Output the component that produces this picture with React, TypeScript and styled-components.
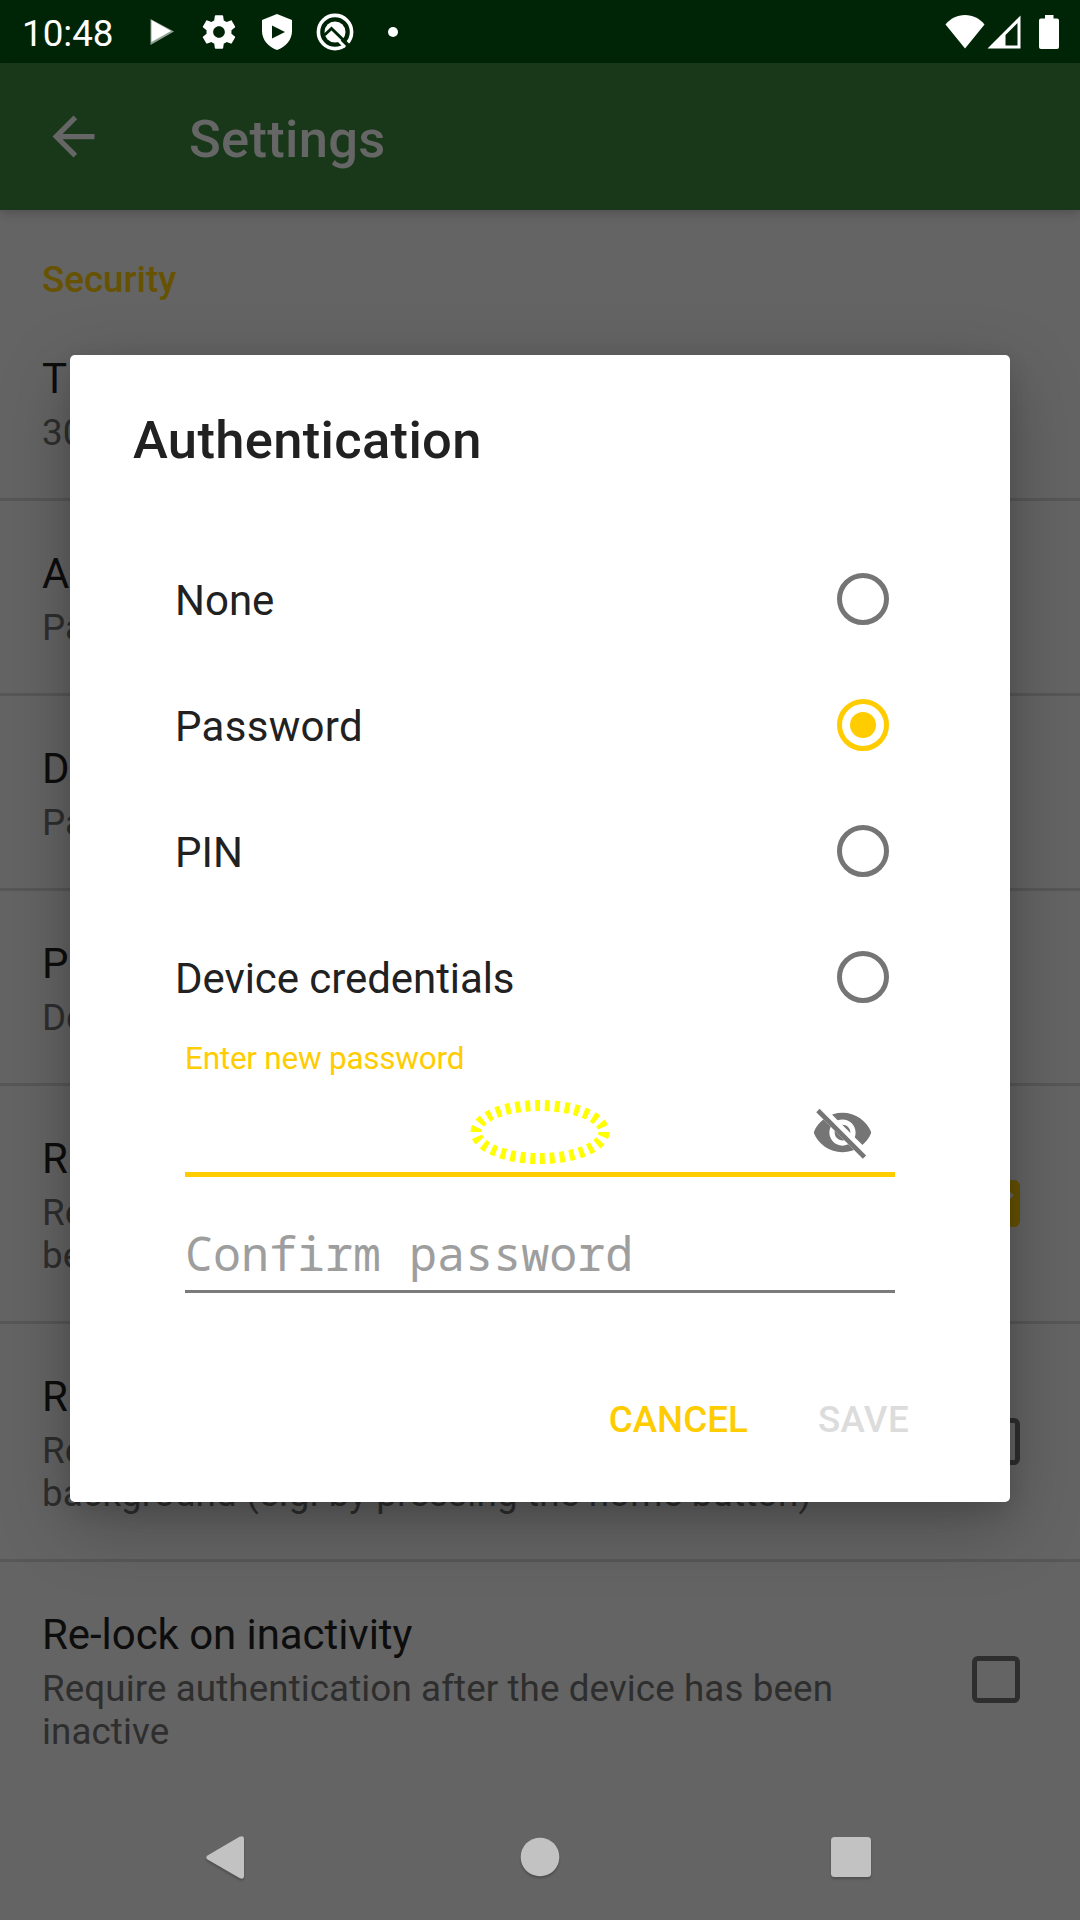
import React from "react";
import styled, { createGlobalStyle } from "styled-components";

const Global = createGlobalStyle`
  *, *::before, *::after { box-sizing: border-box; }
  body { margin: 0; background: #646464; font-family: Roboto, "Noto Sans", sans-serif; }
`;

const Screen = styled.div`
  position: relative;
  width: 1080px;
  height: 1920px;
  display: flex;
  flex-direction: column;
  overflow: hidden;
  background: #646464;
`;

const StatusBar = styled.header`
  display: flex;
  align-items: center;
  justify-content: space-between;
  flex: none;
  height: 63px;
  padding: 0 21px 0 22px;
  background: #002506;
  color: #fff;
`;

const Clock = styled.span`
  font-size: 36.75px;
  line-height: 43px;
  margin-right: 28px;
  padding-top: 3px;
`;

const StatusGroup = styled.div`
  display: flex;
  align-items: center;
`;

const StatusIcon = styled.svg<{ $gap?: number }>`
  display: block;
  flex: none;
  margin-left: ${(p) => p.$gap ?? 0}px;
`;

const AppBar = styled.div`
  position: relative;
  display: flex;
  align-items: center;
  flex: none;
  height: 147px;
  padding-left: 42px;
  gap: 84px;
  background: #183819;
  box-shadow: 0 3px 10px rgba(0, 0, 0, 0.2);
`;

const AppTitle = styled.h1`
  margin: 0;
  padding-top: 5px;
  font-size: 52.5px;
  font-weight: 500;
  line-height: 62px;
  letter-spacing: 0.3px;
  color: #666;
`;

const List = styled.main`
  flex: 1;
  min-height: 0;
  overflow: hidden;
`;

const SectionTitle = styled.h2`
  margin: 0;
  padding: 48px 42px 5px;
  font-size: 36.75px;
  font-weight: 500;
  line-height: 43px;
  color: #665200;
`;

const Row = styled.div<{ $last?: boolean }>`
  display: flex;
  align-items: center;
  justify-content: space-between;
  padding: 0 60px 0 42px;
  border-bottom: ${(p) => (p.$last ? "none" : "3px solid #575757")};
`;

const RowText = styled.div`
  padding: 48px 0 44px;
  white-space: nowrap;
`;

const RowTitle = styled.div`
  font-size: 42px;
  line-height: 49px;
  letter-spacing: -0.06px;
  color: #0d0d0d;
`;

const RowSummary = styled.div<{ $tracking: number }>`
  margin-top: 8px;
  font-size: 36.75px;
  line-height: 43px;
  letter-spacing: ${(p) => p.$tracking}px;
  color: #2e2e2e;
`;

const Check = styled.span<{ $on: boolean }>`
  display: flex;
  align-items: center;
  justify-content: center;
  width: 48px;
  height: 47px;
  border: 5px solid ${(p) => (p.$on ? "#665200" : "#2e2e2e")};
  border-radius: 6px;
  background: ${(p) => (p.$on ? "#665200" : "transparent")};
`;

const CheckMark = styled.svg`
  flex: none;
`;

const NavBar = styled.nav`
  display: flex;
  align-items: center;
  flex: none;
  height: 126px;
  padding-left: 206px;
  svg { display: block; filter: drop-shadow(0 2px 1px rgba(0, 0, 0, 0.22)); }
`;

const NavIcon = styled.svg<{ $gap?: number }>`
  flex: none;
  margin-left: ${(p) => p.$gap ?? 0}px;
`;

const DialogLayer = styled.div`
  position: absolute;
  inset: 0;
  padding: 355px 70px 0;
`;

const Dialog = styled.section`
  position: relative;
  display: flex;
  flex-direction: column;
  height: 1147px;
  padding-top: 54px;
  border-radius: 5px;
  background: #fff;
  box-shadow: 0 22px 70px rgba(0, 0, 0, 0.26), 0 8px 22px rgba(0, 0, 0, 0.1);
`;

const DialogTitle = styled.h2`
  margin: 0 63px 65px;
  font-size: 52.5px;
  font-weight: 500;
  line-height: 62px;
  letter-spacing: 0.33px;
  color: #212121;
`;

const Option = styled.div`
  display: flex;
  align-items: center;
  justify-content: space-between;
  height: 126px;
  padding: 0 121px 0 105px;
  font-size: 42px;
  line-height: 49px;
  color: #212121;
`;

const OptionLabel = styled.span<{ $tracking: number }>`
  padding-top: 3px;
  letter-spacing: ${(p) => p.$tracking}px;
`;

const Radio = styled.span<{ $on: boolean }>`
  display: flex;
  align-items: center;
  justify-content: center;
  width: 52px;
  height: 52px;
  border: 5px solid ${(p) => (p.$on ? "#ffcc00" : "#757575")};
  border-radius: 50%;
  &::after {
    content: "";
    width: 26px;
    height: 26px;
    border-radius: 50%;
    background: ${(p) => (p.$on ? "#ffcc00" : "transparent")};
  }
`;

const Fields = styled.div`
  display: flex;
  flex-direction: column;
  margin: 0 115px;
`;

const FloatingLabel = styled.label`
  font-size: 31.5px;
  line-height: 37px;
  letter-spacing: -0.24px;
  color: #ffcc00;
`;

const PasswordField = styled.div`
  display: flex;
  justify-content: flex-end;
  height: 100px;
  padding: 24px 21px 0 0;
  border-bottom: 5px solid #ffcc00;
`;

const ConfirmField = styled.div`
  height: 116px;
  padding-top: 49px;
  border-bottom: 3px solid #7b7b7b;
  font-family: "Noto Sans Mono", "DejaVu Sans Mono", monospace;
  font-size: 46.7px;
  line-height: 55px;
  color: #9e9e9e;
`;

const FocusRing = styled.svg`
  position: absolute;
  left: 400px;
  top: 744px;
`;

const Actions = styled.div`
  display: flex;
  justify-content: flex-end;
  gap: 70px;
  margin-top: 105px;
  padding-right: 101px;
`;

const Action = styled.button<{ $disabled?: boolean }>`
  padding: 0;
  border: 0;
  background: none;
  font: 500 36.75px/43px Roboto, "Noto Sans", sans-serif;
  letter-spacing: ${(p) => (p.$disabled ? 0.35 : 0.05)}px;
  color: ${(p) => (p.$disabled ? "#dcdcdc" : "#ffcc00")};
`;

type Setting = { title: string; summary: string[]; tracking?: number; checked?: boolean };

const settings: Setting[] = [
  { title: "T", summary: ["30"] },
  { title: "A", summary: ["Pa"] },
  { title: "D", summary: ["Pa"] },
  { title: "P", summary: ["De"] },
  { title: "R", summary: ["Re", "be"], checked: true },
  {
    title: "R",
    summary: ["Re", "background (e.g. by pressing the home button)"],
    tracking: 0.19,
    checked: false,
  },
  {
    title: "Re-lock on inactivity",
    summary: ["Require authentication after the device has been", "inactive"],
    tracking: 0.1,
    checked: false,
  },
];

const options = [
  { label: "None", tracking: 0 },
  { label: "Password", tracking: 0.3, selected: true },
  { label: "PIN", tracking: 0 },
  { label: "Device credentials", tracking: -0.07 },
];

function StatusIcons() {
  return (
    <StatusGroup>
      <Clock>10:48</Clock>
      <StatusIcon $gap={8} width="24" height="28" viewBox="0 0 24 28">
        <path d="M0.5 1L24 13.5L0.5 27Z" fill="#8da291" />
        <path d="M1.5 2L21 13L1.5 24Z" fill="#fff" />
      </StatusIcon>
      <StatusIcon $gap={25} width="40" height="40" viewBox="0 0 24 24" fill="#fff">
        <path d="M19.43 12.98c.04-.32.07-.64.07-.98s-.03-.66-.07-.98l2.11-1.65c.19-.15.24-.42.12-.64l-2-3.46c-.12-.22-.39-.3-.61-.22l-2.49 1c-.52-.4-1.08-.73-1.69-.98l-.38-2.65C14.46 2.18 14.25 2 14 2h-4c-.25 0-.46.18-.49.42l-.38 2.65c-.61.25-1.17.59-1.69.98l-2.49-1c-.23-.09-.49 0-.61.22l-2 3.46c-.13.22-.07.49.12.64l2.11 1.65c-.04.32-.07.65-.07.98s.03.66.07.98l-2.11 1.65c-.19.15-.24.42-.12.64l2 3.46c.12.22.39.3.61.22l2.49-1c.52.4 1.08.73 1.69.98l.38 2.65c.03.24.24.42.49.42h4c.25 0 .46-.18.49-.42l.38-2.65c.61-.25 1.17-.59 1.69-.98l2.49 1c.23.09.49 0 .61-.22l2-3.46c.12-.22.07-.49-.12-.64l-2.11-1.65zM12 15.5c-1.93 0-3.5-1.57-3.5-3.5s1.57-3.5 3.5-3.5 3.5 1.57 3.5 3.5-1.57 3.500-3.500 3.500z" />
      </StatusIcon>
      <StatusIcon $gap={23} width="30" height="36" viewBox="0 0 30 36">
        <path d="M15 0L30 6V17C30 26 23.5 33 15 36C6.500 33 0 26 0 17V6Z" fill="#fff" />
        <path d="M10 11.500L23 18L10 24.500Z" fill="#002506" />
      </StatusIcon>
      <StatusIcon $gap={24} width="38" height="38" viewBox="0 0 38 38">
        <circle cx="19" cy="19" r="16.600" fill="none" stroke="#fff" strokeWidth="3.600" />
        <circle cx="19" cy="19" r="10.500" fill="#fff" />
        <path d="M8.500 22L15.500 15.500L33 32.500" fill="none" stroke="#002506" strokeWidth="3" />
        <path d="M26 27L34 36" stroke="#002506" strokeWidth="4" />
        <path d="M22.500 27.500L29 34" stroke="#fff" strokeWidth="3" />
      </StatusIcon>
      <StatusIcon $gap={34} width="10" height="10" viewBox="0 0 10 10">
        <circle cx="5" cy="5" r="5" fill="#fff" />
      </StatusIcon>
    </StatusGroup>
  );
}

function SystemIcons() {
  return (
    <StatusGroup>
      <StatusIcon width="40" height="34" viewBox="0 0 40 34">
        <path d="M0.500 9.500C5.500 3.500 12 0 20 0S34.500 3.500 39.500 9.500L20 33.500Z" fill="#fff" />
      </StatusIcon>
      <StatusIcon $gap={2} width="34" height="34" viewBox="0 0 34 34">
        <path fillRule="evenodd" d="M33.500 0.500V33.500H0.500ZM30.500 8L18.500 20V30.500H30.500Z" fill="#fff" />
      </StatusIcon>
      <StatusIcon $gap={18} width="20" height="34" viewBox="0 0 20 34">
        <path d="M6 0H14.500V3.500H18Q20 3.500 20 5.500V32Q20 34 18 34H2Q0 34 0 32V5.500Q0 3.500 2 3.500H6Z" fill="#fff" />
      </StatusIcon>
    </StatusGroup>
  );
}

export default function App() {
  return (
    <>
      <Global />
      <Screen>
        <StatusBar>
          <StatusIcons />
          <SystemIcons />
        </StatusBar>
        <AppBar>
          <svg width="63" height="63" viewBox="0 0 24 24" fill="#666">
            <path d="M20 11H7.830l5.590-5.590L12 4l-8 8 8 8 1.410-1.410L7.830 13H20v-2z" />
          </svg>
          <AppTitle>Settings</AppTitle>
        </AppBar>
        <List>
          <SectionTitle>Security</SectionTitle>
          {settings.map((s, i) => (
            <Row key={i} $last={i === settings.length - 1}>
              <RowText>
                <RowTitle>{s.title}</RowTitle>
                <RowSummary $tracking={s.tracking ?? 0}>
                  {s.summary.map((line) => (
                    <div key={line}>{line}</div>
                  ))}
                </RowSummary>
              </RowText>
              {s.checked !== undefined && (
                <Check $on={s.checked}>
                  {s.checked && (
                    <CheckMark width="48" height="48" viewBox="0 0 48 48">
                      <path d="M7 25L18 36L40 13.500" fill="none" stroke="#646464" strokeWidth="5" />
                    </CheckMark>
                  )}
                </Check>
              )}
            </Row>
          ))}
        </List>
        <NavBar>
          <NavIcon width="38" height="43" viewBox="0 0 38 43" fill="#c2c2c2">
            <path d="M33.500 0.700Q38 -1 38 3V40Q38 44 33.500 42L1.500 23.500Q-1 21.500 1.500 19.500Z" />
          </NavIcon>
          <NavIcon $gap={276} width="40" height="40" viewBox="0 0 40 40" fill="#c2c2c2">
            <circle cx="20" cy="20" r="19.300" />
          </NavIcon>
          <NavIcon $gap={271} width="40" height="40" viewBox="0 0 40 40" fill="#c2c2c2">
            <rect width="40" height="40" rx="3.500" />
          </NavIcon>
        </NavBar>
        <DialogLayer>
          <Dialog>
            <DialogTitle>Authentication</DialogTitle>
            {options.map((o) => (
              <Option key={o.label}>
                <OptionLabel $tracking={o.tracking}>{o.label}</OptionLabel>
                <Radio $on={!!o.selected} />
              </Option>
            ))}
            <Fields>
              <FloatingLabel>Enter new password</FloatingLabel>
              <PasswordField>
                <svg width="63" height="63" viewBox="0 0 24 24">
                  <clipPath id="eye-cut">
                    <path d="M2 4.270L19.730 22L22.270 19.460L4.540 1.730V1H23V23H1V4.270Z" />
                  </clipPath>
                  <path
                    clipPath="url(#eye-cut)"
                    fill="#757575"
                    d="M12 4.500C7 4.500 2.730 7.610 1 12c1.730 4.390 6 7.500 11 7.500s9.270-3.110 11-7.500c-1.730-4.390-6-7.500-11-7.500zM12 17c-2.760 0-5-2.240-5-5s2.240-5 5-5 5 2.240 5 5-2.240 5-5 5zM12 9c-1.660 0-3 1.340-3 3s1.340 3 3 3 3-1.340 3-3-1.340-3-3-3z"
                  />
                  <path d="M3.270 4.270L19.740 20.740" stroke="#757575" strokeWidth="1.800" strokeLinecap="square" />
                </svg>
              </PasswordField>
              <ConfirmField>Confirm password</ConfirmField>
            </Fields>
            <Actions>
              <Action>CANCEL</Action>
              <Action $disabled>SAVE</Action>
            </Actions>
            <FocusRing width="140" height="66" viewBox="0 0 140 66">
              <ellipse
                cx="70"
                cy="33"
                rx="64"
                ry="26.500"
                pathLength={300}
                fill="none"
                stroke="#ffff00"
                strokeWidth="11"
                strokeDasharray="5 5"
              />
            </FocusRing>
          </Dialog>
        </DialogLayer>
      </Screen>
    </>
  );
}
